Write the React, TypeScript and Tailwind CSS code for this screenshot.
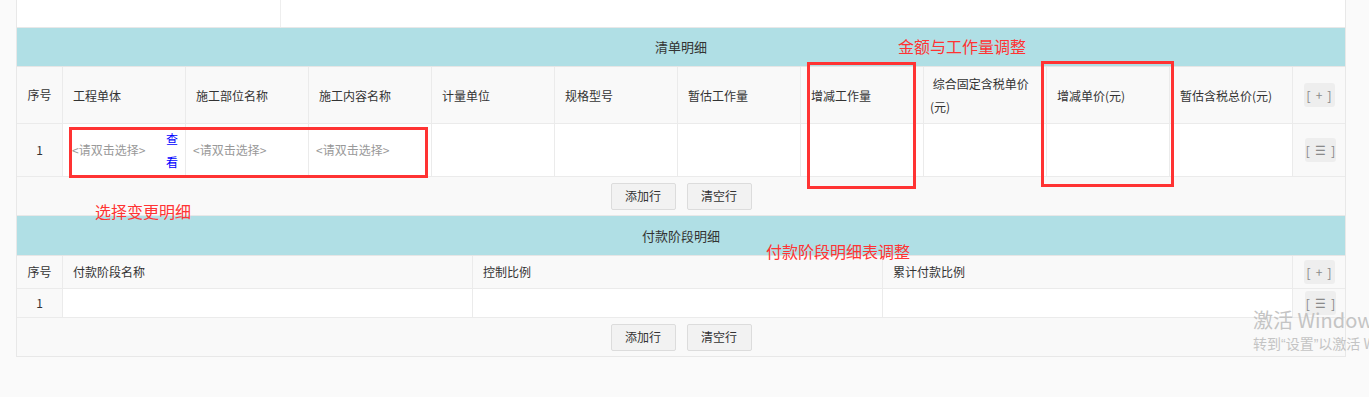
import React from 'react';

const FONT = { fontFamily: '"Microsoft YaHei", "Noto Sans CJK SC", "Noto Sans", sans-serif' };

const detailCols = [
  '工程单体',
  '施工部位名称',
  '施工内容名称',
  '计量单位',
  '规格型号',
  '暂估工作量',
  '增减工作量',
  '综合固定含税单价(元)',
  '增减单价(元)',
  '暂估含税总价(元)',
];

const payCols = ['付款阶段名称', '控制比例', '累计付款比例'];

function SectionTitle({ title, tall }: { title: string; tall?: boolean }) {
  return (
    <div
      className={`${
        tall ? 'h-[40px]' : 'h-[39px]'
      } bg-[#b0dfe5] border-b border-[#e6e6e6] flex items-center justify-center text-[13px] text-[#333]`}
    >
      {title}
    </div>
  );
}

function MiniBtn({ sign, shift }: { sign: string; shift?: boolean }) {
  return (
    <span
      className={`inline-flex items-center justify-center gap-[5px] w-[31px] h-[24px] rounded-[3px] bg-[#eeeeee] text-[13px] leading-none text-[#8a8a8a] ${
        shift ? 'ml-[3px]' : ''
      }`}
    >
      <span>[</span>
      <span className="text-[12px]">{sign}</span>
      <span>]</span>
    </span>
  );
}

function ButtonRow() {
  return (
    <div className="h-[39px] border-b border-[#e8e8e8] bg-[#f9f9f9] flex items-center justify-center gap-[11px]">
      <button className="w-[65px] h-[27px] border border-[#dcdcdc] bg-[#f2f2f2] rounded-[2px] text-[12px] text-[#333]">
        添加行
      </button>
      <button className="w-[65px] h-[27px] border border-[#dcdcdc] bg-[#f2f2f2] rounded-[2px] text-[12px] text-[#333]">
        清空行
      </button>
    </div>
  );
}

function Placeholder() {
  return <span className="text-[12px] text-[#999]">&lt;请双击选择&gt;</span>;
}

const Q = ({ c }: { c: string }) => <span style={{ fontFamily: '"Liberation Sans", sans-serif' }}>{c}</span>;

export default function App() {
  return (
    <div className="relative w-[1369px] h-[397px] overflow-hidden bg-[#fafafa]" style={FONT}>
      <div className="ml-[16px] w-[1330px] border-x border-[#e8e8e8]">
        {/* leftover row above */}
        <div className="h-[28px] bg-white border-b border-[#e8e8e8] flex">
          <div className="w-[264px] border-r border-[#eeeeee]" />
          <div className="flex-1" />
        </div>

        {/* 清单明细 */}
        <SectionTitle title="清单明细" />
        <div className="h-[57px] flex bg-[#f9f9f9] border-b border-[#ebebeb] text-[12px] text-[#333]">
          <div className="w-[46px] shrink-0 border-r border-[#ebebeb] flex items-center justify-center">序号</div>
          {detailCols.map((c, i) => (
            <div
              key={c}
              className={`w-[123px] shrink-0 border-r border-[#ebebeb] flex items-center leading-[23px] ${
                i === 7 ? 'px-[6px]' : 'px-[10px]'
              }`}
            >
              {i === 7 ? '\u00a0' + c : c}
            </div>
          ))}
          <div className="flex-1 flex items-center justify-center">
            <MiniBtn sign="+" />
          </div>
        </div>
        <div className="h-[53px] flex bg-white border-b border-[#ebebeb] text-[12px] text-[#333]">
          <div className="w-[46px] shrink-0 border-r border-[#ebebeb] bg-[#f9f9f9] flex items-center justify-center">1</div>
          <div className="w-[123px] shrink-0 border-r border-[#ebebeb] flex items-center justify-between pl-[9px] pr-[7px]">
            <Placeholder />
            <a className="w-[12px] text-[12px] leading-[23px] text-[#0000ff]">查看</a>
          </div>
          <div className="w-[123px] shrink-0 border-r border-[#ebebeb] flex items-center px-[7px]">
            <Placeholder />
          </div>
          <div className="w-[123px] shrink-0 border-r border-[#ebebeb] flex items-center px-[7px]">
            <Placeholder />
          </div>
          {Array.from({ length: 7 }).map((_, i) => (
            <div key={i} className="w-[123px] shrink-0 border-r border-[#ebebeb]" />
          ))}
          <div className="flex-1 bg-[#f9f9f9] flex items-center justify-center">
            <MiniBtn sign="☰" shift />
          </div>
        </div>
        <ButtonRow />

        {/* 付款阶段明细 */}
        <SectionTitle title="付款阶段明细" tall />
        <div className="h-[33px] flex bg-[#f9f9f9] border-b border-[#ebebeb] text-[12px] text-[#333]">
          <div className="w-[46px] shrink-0 border-r border-[#ebebeb] flex items-center justify-center">序号</div>
          {payCols.map((c) => (
            <div key={c} className="w-[410px] shrink-0 border-r border-[#ebebeb] flex items-center px-[10px]">
              {c}
            </div>
          ))}
          <div className="flex-1 flex items-center justify-center">
            <MiniBtn sign="+" />
          </div>
        </div>
        <div className="h-[29px] flex bg-white border-b border-[#ebebeb] text-[12px] text-[#333]">
          <div className="w-[46px] shrink-0 border-r border-[#ebebeb] bg-[#f9f9f9] flex items-center justify-center">1</div>
          {payCols.map((c) => (
            <div key={c} className="w-[410px] shrink-0 border-r border-[#ebebeb]" />
          ))}
          <div className="flex-1 bg-[#f9f9f9] flex items-center justify-center">
            <MiniBtn sign="☰" shift />
          </div>
        </div>
        <ButtonRow />
      </div>

      {/* red review annotations */}
      <div className="absolute left-[69px] top-[127px] w-[359px] h-[51px] border-[3px] border-[#f33]" />
      <div className="absolute left-[807px] top-[62px] w-[109px] h-[127px] border-[3px] border-[#f33]" />
      <div className="absolute left-[1041px] top-[61px] w-[133px] h-[126px] border-[3px] border-[#f33]" />
      <div className="absolute left-[898px] top-[37px] text-[16px] leading-[18px] text-[#f33]">金额与工作量调整</div>
      <div className="absolute left-[95px] top-[202px] text-[16px] leading-[18px] text-[#f33]">选择变更明细</div>
      <div className="absolute left-[766px] top-[242px] text-[16px] leading-[18px] text-[#f33]">付款阶段明细表调整</div>

      {/* activation watermark */}
      <div className="absolute left-[1253px] top-[307px] text-[#c4c4c4] whitespace-nowrap">
        <div className="text-[20px] leading-[26px]">激活 Windows</div>
        <div className="text-[14px] leading-[20px]">
          转到<Q c="“" />设置<Q c="”" />以激活 Windows。
        </div>
      </div>
    </div>
  );
}
